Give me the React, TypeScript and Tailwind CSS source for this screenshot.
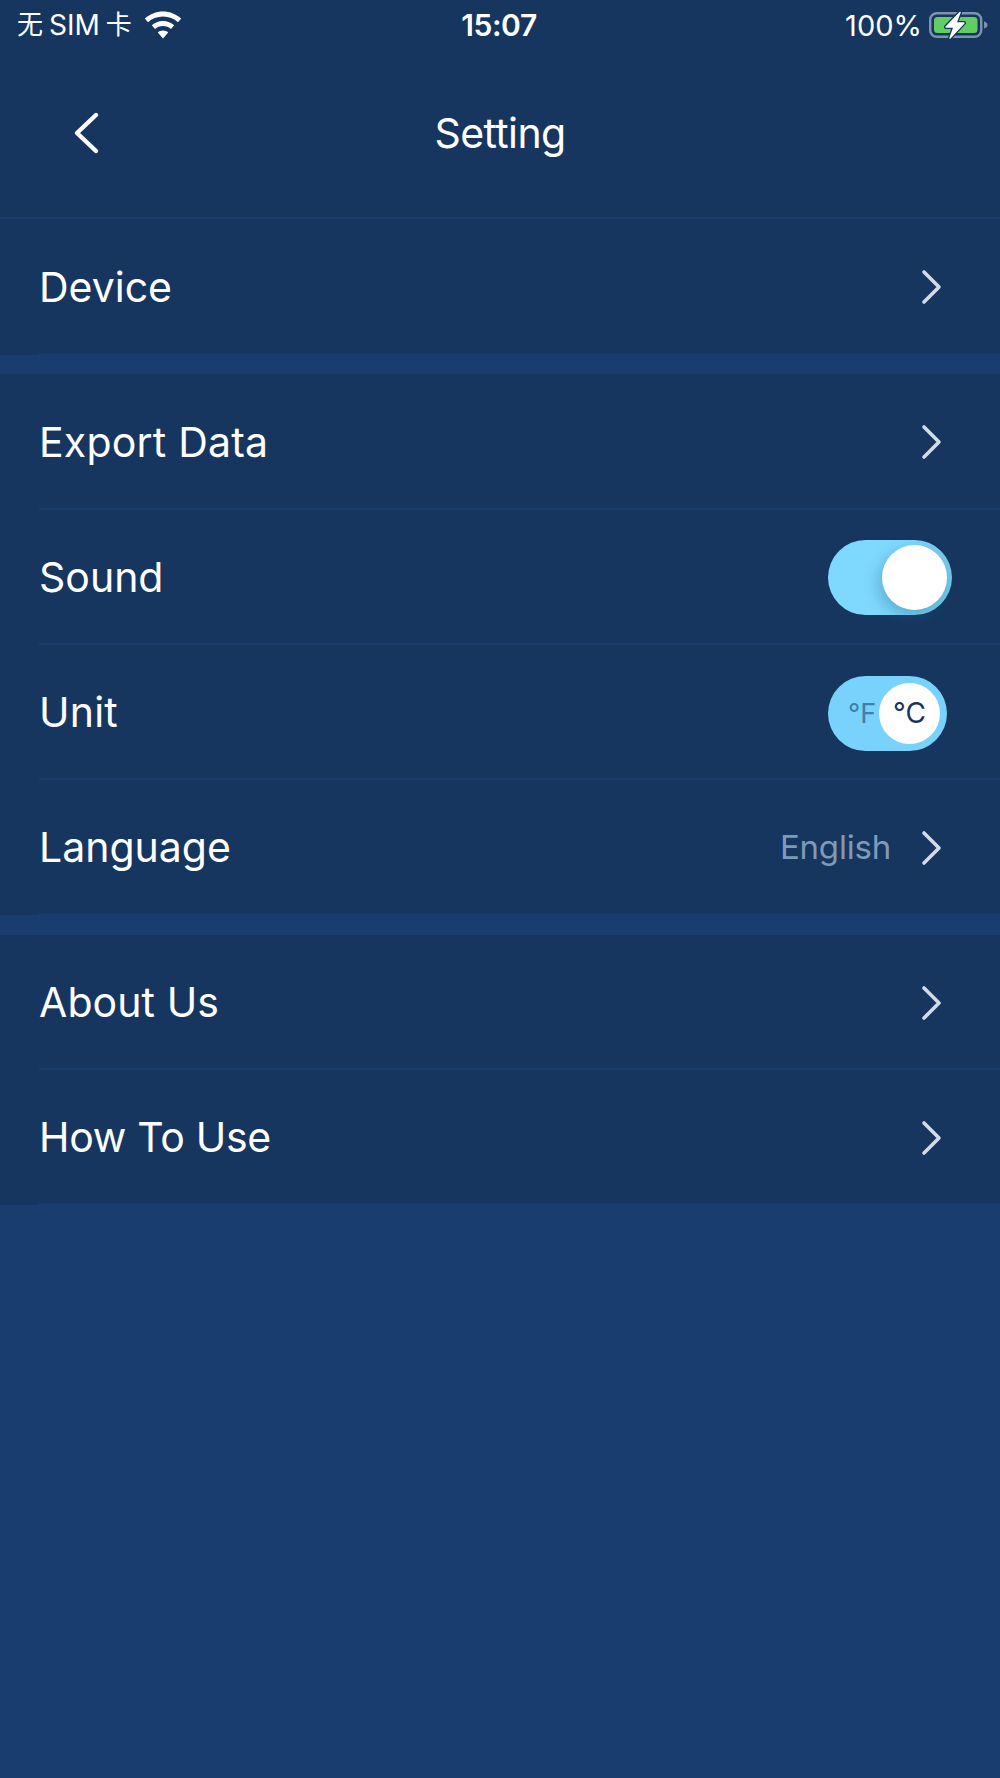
import React from "react";

const font = "font-['Inter','Noto_Sans_CJK_SC',sans-serif]";

function Chevron() {
  return (
    <svg width="22" height="36" viewBox="0 0 22 36" fill="none" className="shrink-0 -mr-[2px]">
      <path d="M3 3 L18 18 L3 33" stroke="#d3dbe6" strokeWidth="3.6" strokeLinecap="round" strokeLinejoin="round" />
    </svg>
  );
}

function Row({
  label,
  h = "h-[135px]",
  track = "tracking-[0px]",
  children,
}: {
  label: string;
  h?: string;
  track?: string;
  children?: React.ReactNode;
}) {
  return (
    <div className={`${h} bg-[#16365f] flex flex-col`}>
      <div className="flex-1 flex items-center pl-[39px] pr-[59px] pt-[2px]">
        <span className={`text-[41px] leading-none text-white font-normal flex-1 ${track}`}>{label}</span>
        {children ?? <Chevron />}
      </div>
      <div className="h-[2px] ml-[39px] bg-[#193c6f]" />
    </div>
  );
}

export default function App() {
  return (
    <div className={`w-[1000px] h-[1778px] bg-[#1a3d70] overflow-hidden ${font}`}>
      <div className="h-[217px] bg-[#16365f] flex flex-col">
        <div className="h-[50px] flex items-center justify-between pl-[17px] pr-[12px] text-white">
          <div className="flex items-center gap-[12px] w-[293px]">
            <div className="flex items-center gap-[6px] leading-none">
              <span className="text-[26px]">无</span>
              <span className="text-[28px]">SIM</span>
              <span className="text-[26px]">卡</span>
            </div>
            <svg width="38" height="28" viewBox="0 0 38 28" fill="white">
              <path d="M19 0.5C12 0.5 5.6 3.2 0.8 7.6L4 11.3C7.9 7.7 13.2 5.5 19 5.5C24.8 5.5 30.1 7.7 34 11.3L37.2 7.6C32.4 3.2 26 0.5 19 0.5Z" />
              <path d="M19 10C14.7 10 10.8 11.6 7.8 14.3L11 18C13.1 16.1 15.9 15 19 15C22.1 15 24.9 16.1 27 18L30.2 14.3C27.2 11.6 23.3 10 19 10Z" />
              <path d="M19 19.5C17 19.5 15.2 20.2 13.8 21.4L19 27.5L24.2 21.4C22.8 20.2 21 19.5 19 19.5Z" />
            </svg>
          </div>
          <span className="text-[30px] leading-none font-semibold tracking-[-0.4px]">15:07</span>
          <div className="flex items-center justify-end gap-[7px] w-[300px]">
            <span className="text-[29px] leading-none tracking-[0px]">100%</span>
            <svg width="59" height="30" viewBox="0 0 59 30" fill="none">
              <rect x="1.2" y="3.2" width="51" height="23.6" rx="6.5" stroke="#7d93ad" strokeWidth="2.4" />
              <rect x="5" y="7" width="43.5" height="16" rx="3.5" fill="#62cd62" />
              <path d="M55 11.5C57 12 58.5 13.3 58.5 15C58.5 16.7 57 18 55 18.5Z" fill="#7d93ad" />
              <path d="M31 2.5L17 17H25L21 28L35 13H27Z" fill="#16365f" stroke="#16365f" strokeWidth="4" strokeLinejoin="round" />
              <path d="M31 2.5L17 17H25L21 28L35 13H27Z" fill="white" stroke="white" strokeWidth="1.4" strokeLinejoin="round" />
            </svg>
          </div>
        </div>
        <div className="relative h-[167px] flex items-center justify-center">
          <span className="text-[41px] leading-none text-white font-normal tracking-[-0.6px]">Setting</span>
          <svg width="28" height="44" viewBox="0 0 28 44" fill="none" className="absolute left-[73px] top-[61px]">
            <path d="M23 4 L4 22 L23 40" stroke="white" strokeWidth="4.4" strokeLinecap="round" strokeLinejoin="round" />
          </svg>
        </div>
      </div>
      <div className="h-[2px] bg-[#193c6f]" />

      <Row label="Device" h="h-[136px]" />
      <div className="h-[19px]" />

      <Row label="Export Data" h="h-[136px]" track="tracking-[0.2px]" />
      <Row label="Sound">
        <div className="-mr-[11px] w-[124px] h-[75px] rounded-full bg-[linear-gradient(100deg,#7fd8fd_55%,#6fc4e4_100%)] flex items-center justify-end pr-[5px]">
          <div className="w-[65px] h-[65px] rounded-full bg-white shadow-[-4px_6px_14px_rgba(40,110,150,0.35)]" />
        </div>
      </Row>
      <Row label="Unit" track="tracking-[0.2px]">
        <div className="-mr-[6px] mt-[1px] w-[119px] h-[75px] rounded-full bg-[#79d2fc] flex items-center justify-end pr-[7px] pl-[20px]">
          <span className="text-[27px] leading-none text-[#3f7fa8] flex-1">°F</span>
          <div className="w-[61px] h-[61px] rounded-full bg-white flex items-center justify-center">
            <span className="text-[28px] leading-none text-[#16365f]">°C</span>
          </div>
        </div>
      </Row>
      <Row label="Language">
        <span className="text-[33px] leading-none text-[#7f9ab8] mr-[30px] tracking-[-0.2px]">English</span>
        <Chevron />
      </Row>
      <div className="h-[20px]" />

      <Row label="About Us" track="tracking-[0.1px]" />
      <Row label="How To Use" track="tracking-[-0.3px]" />
    </div>
  );
}
